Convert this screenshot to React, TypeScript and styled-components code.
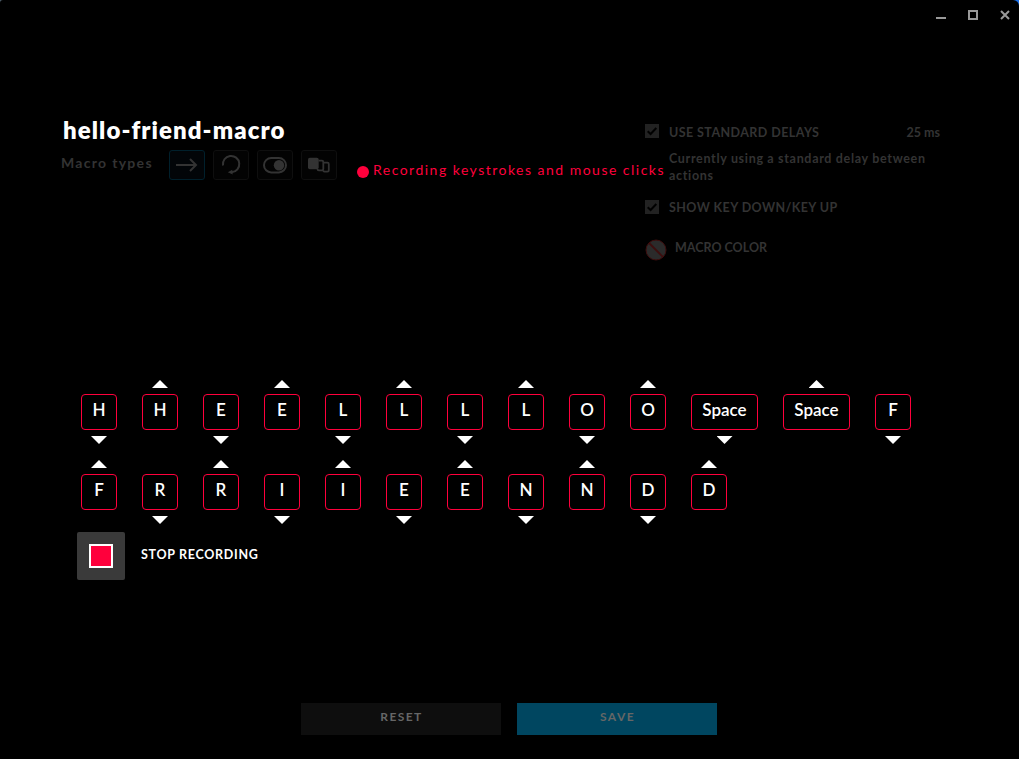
import React from "react";
import styled, { createGlobalStyle } from "styled-components";

const GlobalStyle = createGlobalStyle`
  * { box-sizing: border-box; }
  body {
    margin: 0;
    background: linear-gradient(90deg, #53636f 50%, #1a6fe8 50%);
    font-family: Lato, "Liberation Sans", sans-serif;
  }
`;

const Window = styled.div`
  width: 1019px;
  height: 759px;
  display: flex;
  flex-direction: column;
  overflow: hidden;
  background: #000;
  border-radius: 3px 6px 0 0;
`;

const TitleBar = styled.div`
  height: 30px;
  flex: none;
  display: flex;
  justify-content: flex-end;
  align-items: center;
  gap: 20px;
  padding-right: 8px;
`;

const ControlIcon = styled.svg`
  width: 12px;
  height: 12px;
  display: block;
  fill: none;
  stroke: #999;
  stroke-width: 2;
`;

const Header = styled.header`
  height: 350px;
  flex: none;
  display: flex;
  align-items: flex-start;
  padding: 84px 0 0 61px;
`;

const Identity = styled.div`
  width: 296px;
  flex: none;
`;

const Label = styled.span<{
  $size: number;
  $line: number;
  $color: string;
  $spacing?: number;
  $weight?: number;
}>`
  display: block;
  margin: 0;
  white-space: nowrap;
  font-size: ${(p) => p.$size}px;
  line-height: ${(p) => p.$line}px;
  color: ${(p) => p.$color};
  letter-spacing: ${(p) => p.$spacing ?? 0}px;
  font-weight: ${(p) => p.$weight ?? 700};
`;

const NameRow = styled.div`
  height: 36px;
  padding-left: 2px;
`;

const TypesRow = styled.div`
  display: flex;
  gap: 8px;
`;

const TypesCaption = styled.div`
  width: 100px;
  height: 30px;
`;

const TypeList = styled.div`
  display: flex;
  gap: 8px;
`;

const TypeButton = styled.button<{ $active?: boolean }>`
  width: 36px;
  height: 30px;
  padding: 0;
  display: flex;
  align-items: center;
  justify-content: center;
  border-radius: 3px;
  border: 1px solid ${(p) => (p.$active ? "#00202c" : "#0f0f0f")};
  background: ${(p) => (p.$active ? "#020508" : "#030303")};
`;

const TypeIcon = styled.svg`
  width: 34px;
  height: 28px;
  display: block;
  fill: none;
  stroke: #333;
  stroke-width: 2;
`;

const Status = styled.div`
  width: 288px;
  flex: none;
  padding-top: 46px;
  display: flex;
  align-items: center;
  gap: 4px;
`;

const Dot = styled.span`
  width: 12px;
  height: 12px;
  flex: none;
  margin-top: 4px;
  border-radius: 50%;
  background: #ff003c;
`;

const Options = styled.div`
  width: 296px;
  flex: none;
  padding-top: 10px;
`;

const OptionRow = styled.div`
  display: flex;
  gap: 10px;
`;

const OptionValue = styled.div`
  margin: 0 1px 0 auto;
`;

const Hint = styled.p`
  margin: 9px 0 16px 24px;
`;

const CheckIcon = styled.svg`
  width: 14px;
  height: 14px;
  flex: none;
  display: block;
`;

const ColorRow = styled.div`
  display: flex;
  gap: 8px;
  margin-top: 23px;
`;

const Swatch = styled.svg`
  width: 22px;
  height: 22px;
  flex: none;
  display: block;
`;

const Recorder = styled.main`
  flex: 1;
  padding-left: 77px;
`;

const KeyRow = styled.div`
  display: flex;
  height: 80px;
  padding-left: 4px;
  gap: 25px;
`;

const KeySlot = styled.div`
  display: flex;
  flex-direction: column;
  align-items: center;
`;

const KeyCap = styled.div<{ $wide: boolean }>`
  width: ${(p) => (p.$wide ? 67 : 36)}px;
  height: 36px;
  margin: 6px 0;
  border: 1px solid #ff003c;
  border-radius: 4px;
  color: #fff;
  font-size: 17px;
  font-weight: 600;
  line-height: 30px;
  text-align: center;
`;

const Arrow = styled.span<{ $dir: "up" | "down"; $on: boolean }>`
  width: 16px;
  height: 8px;
  background: ${(p) => (p.$on ? "#fff" : "transparent")};
  clip-path: ${(p) =>
    p.$dir === "up"
      ? "polygon(50% 0, 100% 100%, 0 100%)"
      : "polygon(0 0, 100% 0, 50% 100%)"};
`;

const StopRow = styled.div`
  display: flex;
  gap: 16px;
  margin-top: -8px;
`;

const StopButton = styled.button`
  width: 48px;
  height: 48px;
  padding: 0;
  border: 0;
  border-radius: 2px;
  background: #3a3a3a;
  display: grid;
  place-items: center;
`;

const StopSquare = styled.span`
  width: 24px;
  height: 24px;
  border: 2px solid #fff;
  background: #ff003c;
`;

const StopCaption = styled.div`
  padding-top: 13px;
`;

const Footer = styled.footer`
  height: 56px;
  flex: none;
  display: flex;
  justify-content: center;
  gap: 16px;
  padding-right: 1px;
`;

const FooterButton = styled.button<{ $primary?: boolean }>`
  width: 200px;
  height: 32px;
  padding: 0 0 4px 1px;
  border: 0;
  background: ${(p) => (p.$primary ? "#004660" : "#0e0e0e")};
  color: #666;
  font: 700 12px/28px Lato, "Liberation Sans", sans-serif;
  letter-spacing: 1.4px;
`;

type Key = [string, "up" | "down"];

const ROWS: Key[][] = [
  [
    ["H", "down"], ["H", "up"], ["E", "down"], ["E", "up"], ["L", "down"],
    ["L", "up"], ["L", "down"], ["L", "up"], ["O", "down"], ["O", "up"],
    ["Space", "down"], ["Space", "up"], ["F", "down"],
  ],
  [
    ["F", "up"], ["R", "down"], ["R", "up"], ["I", "down"], ["I", "up"],
    ["E", "down"], ["E", "up"], ["N", "down"], ["N", "up"], ["D", "down"],
    ["D", "up"],
  ],
];

const Check = () => (
  <CheckIcon viewBox="0 0 14 14">
    <rect width="14" height="14" fill="#222" />
    <path d="M2.7 7.2 5.6 10 11.3 4" fill="none" stroke="#000" strokeWidth="2" />
  </CheckIcon>
);

const MUTED = "#333";

export default function App() {
  return (
    <>
      <GlobalStyle />
      <Window>
        <TitleBar>
          <ControlIcon viewBox="0 0 12 12"><path d="M1 9h10" /></ControlIcon>
          <ControlIcon viewBox="0 0 12 12"><path d="M2 2h8v8H2z" /></ControlIcon>
          <ControlIcon viewBox="0 0 12 12"><path d="M2 2l8 8M10 2l-8 8" /></ControlIcon>
        </TitleBar>

        <Header>
          <Identity>
            <NameRow>
              <Label as="h1" $size={24} $line={31} $color="#fff" $spacing={1.07} $weight={800}>
                hello-friend-macro
              </Label>
            </NameRow>
            <TypesRow>
              <TypesCaption>
                <Label $size={14} $line={26} $color={MUTED} $spacing={1.3}>Macro types</Label>
              </TypesCaption>
              <TypeList>
                <TypeButton $active>
                  <TypeIcon viewBox="0 0 34 28"><path d="M6 14h20M20 8l6 6-6 6" /></TypeIcon>
                </TypeButton>
                <TypeButton>
                  <TypeIcon viewBox="0 0 34 28">
                    <path d="M9 14.5A8.2 8.2 0 1 1 17.7 21.3" />
                    <path d="M13.8 21.3l4.5-2.6.4 4.8z" fill="#333" stroke="none" />
                  </TypeIcon>
                </TypeButton>
                <TypeButton>
                  <TypeIcon viewBox="0 0 34 28">
                    <rect x="6" y="7" width="22" height="14.4" rx="7.2" />
                    <circle cx="21" cy="14.2" r="5.2" fill="#333" stroke="none" />
                  </TypeIcon>
                </TypeButton>
                <TypeButton>
                  <TypeIcon viewBox="0 0 34 28">
                    <rect x="6" y="6.7" width="10.7" height="11.6" rx="1.8" fill="#333" stroke="none" />
                    <path d="M16.5 9.7h3.5a1.3 1.3 0 0 1 1.3 1.3v7a1.3 1.3 0 0 1-1.3 1.3h-3.2a1.3 1.3 0 0 1-1.3-1.3" strokeWidth="1.8" />
                    <path d="M21.5 11.7h4a1.3 1.3 0 0 1 1.3 1.3v6.3a1.3 1.3 0 0 1-1.3 1.3h-3a1.3 1.3 0 0 1-1.3-1.3" strokeWidth="1.8" />
                  </TypeIcon>
                </TypeButton>
              </TypeList>
            </TypesRow>
          </Identity>

          <Status>
            <Dot />
            <Label $size={14} $line={20} $color="#ff003c" $spacing={1.48} $weight={400}>
              Recording keystrokes and mouse clicks
            </Label>
          </Status>

          <Options>
            <OptionRow>
              <Check />
              <Label $size={12.5} $line={17} $color={MUTED} $spacing={0.43}>USE STANDARD DELAYS</Label>
              <OptionValue>
                <Label $size={12.5} $line={17} $color={MUTED}>25 ms</Label>
              </OptionValue>
            </OptionRow>
            <Hint>
              <Label $size={12.5} $line={17} $color={MUTED} $spacing={0.68}>
                Currently using a standard delay between
              </Label>
              <Label $size={12.5} $line={17} $color={MUTED} $spacing={0.68}>actions</Label>
            </Hint>
            <OptionRow>
              <Check />
              <Label $size={12.5} $line={16} $color={MUTED} $spacing={0.42}>SHOW KEY DOWN/KEY UP</Label>
            </OptionRow>
            <ColorRow>
              <Swatch viewBox="0 0 22 22">
                <circle cx="11" cy="11" r="10" fill="#2b2b2b" stroke="#3d0d0d" />
                <path d="M4 4l14 14" stroke="#3d0d0d" strokeWidth="1.8" />
              </Swatch>
              <Label $size={12.5} $line={17} $color={MUTED}>MACRO COLOR</Label>
            </ColorRow>
          </Options>
        </Header>

        <Recorder>
          {ROWS.map((row, r) => (
            <KeyRow key={r}>
              {row.map(([name, dir], i) => (
                <KeySlot key={i}>
                  <Arrow $dir="up" $on={dir === "up"} />
                  <KeyCap $wide={name.length > 1}>{name}</KeyCap>
                  <Arrow $dir="down" $on={dir === "down"} />
                </KeySlot>
              ))}
            </KeyRow>
          ))}
          <StopRow>
            <StopButton aria-label="Stop recording"><StopSquare /></StopButton>
            <StopCaption>
              <Label $size={12.5} $line={20} $color="#fff" $spacing={0.7}>STOP RECORDING</Label>
            </StopCaption>
          </StopRow>
        </Recorder>

        <Footer>
          <FooterButton>RESET</FooterButton>
          <FooterButton $primary>SAVE</FooterButton>
        </Footer>
      </Window>
    </>
  );
}
